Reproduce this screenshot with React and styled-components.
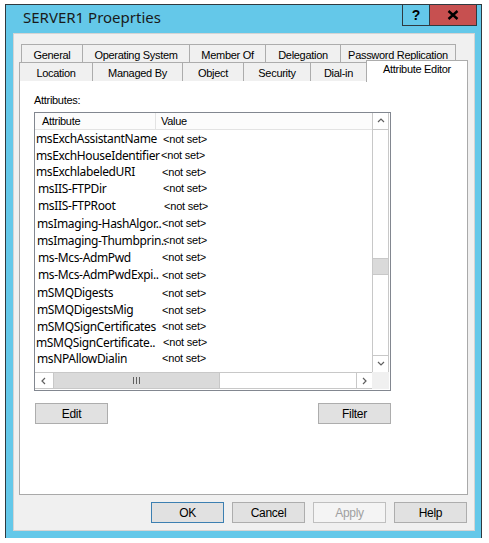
import React from "react";
import styled, { createGlobalStyle } from "styled-components";

const GlobalStyle = createGlobalStyle`
  body {
    margin: 0;
    background: #ffffff;
    font-family: "Liberation Sans", Arial, sans-serif;
  }
`;

const ROW1 = [
  { label: "General", w: 62 },
  { label: "Operating System", w: 108 },
  { label: "Member Of", w: 77 },
  { label: "Delegation", w: 76 },
  { label: "Password Replication", w: 116 },
];

const ROW2 = [
  { label: "Location", w: 74 },
  { label: "Managed By", w: 91 },
  { label: "Object", w: 62 },
  { label: "Security", w: 68 },
  { label: "Dial-in", w: 57 },
  { label: "Attribute Editor", w: 102, active: true },
];

const ATTRS = [
  { name: "msExchAssistantName", h: 17, dx: 1, vx: 1 },
  { name: "msExchHouseIdentifier", h: 16, dx: 1, vx: -1 },
  { name: "msExchlabeledURI", h: 17, dx: 1, vx: 0 },
  { name: "msIIS-FTPDir", h: 16, dx: 3, vx: 1 },
  { name: "msIIS-FTPRoot", h: 19, dx: 3, vx: 2 },
  { name: "msImaging-HashAlgor..", h: 16, dx: 2, vx: 0 },
  { name: "msImaging-Thumbprin..", h: 18, dx: 2, vx: 1 },
  { name: "ms-Mcs-AdmPwd", h: 16, dx: 3, vx: 0 },
  { name: "ms-Mcs-AdmPwdExpi..", h: 19, dx: 3, vx: 0 },
  { name: "mSMQDigests", h: 17, dx: 2, vx: 0 },
  { name: "mSMQDigestsMig", h: 17, dx: 2, vx: 0 },
  { name: "mSMQSignCertificates", h: 16, dx: 2, vx: 0 },
  { name: "mSMQSignCertificate..", h: 16, dx: 1, vx: 1 },
  { name: "msNPAllowDialin", h: 16, dx: 2, vx: 0 },
];

const Window = styled.div`
  box-sizing: border-box;
  margin: 4px 0 0 5px;
  width: 477px;
  height: 534px;
  background: #64c8e9;
  border: 1px solid #2f3a40;
  border-bottom: none;
  display: flex;
  flex-direction: column;
`;

const TitleBar = styled.div`
  height: 28px;
  display: flex;
  align-items: flex-start;
  flex-shrink: 0;
`;

const Title = styled.div`
  flex: 1;
  padding: 2px 0 0 17px;
  font-family: "Noto Sans", "Open Sans", sans-serif;
  font-size: 15px;
  color: #1a1a1a;
`;

const CaptionButton = styled.div`
  box-sizing: border-box;
  margin-top: -1px;
  width: ${(p) => p.$w}px;
  height: 22px;
  border: 1px solid #2f3a40;
  background: ${(p) => p.$bg};
  display: flex;
  align-items: center;
  justify-content: center;
  font-family: "Liberation Sans", Arial, sans-serif;
  font-weight: bold;
  font-size: 14px;
  color: #000;
  & + & {
    margin-left: -1px;
  }
`;

const CaptionGroup = styled.div`
  display: flex;
  margin-right: 4px;
`;

const Client = styled.div`
  box-sizing: border-box;
  margin: 0 6px 0 7px;
  height: 498px;
  background: #f0f0f0;
  border: 1px solid #d4d4d4;
  padding: 10px 6px 0 5px;
  display: flex;
  flex-direction: column;
`;

const TabStrip = styled.div`
  display: flex;
  flex-direction: column;
  font-size: 11px;
  letter-spacing: -0.3px;
  color: #000;
`;

const TabRow = styled.div`
  display: flex;
  height: 18px;
  padding-left: ${(p) => p.$indent}px;
  position: relative;
  z-index: ${(p) => p.$z};
`;

const Tab = styled.div`
  box-sizing: border-box;
  width: ${(p) => p.$w}px;
  height: 19px;
  border: 1px solid #acacac;
  border-bottom: none;
  background: #f0f0f0;
  display: flex;
  align-items: center;
  justify-content: center;
  padding-top: 1px;
  & + & {
    margin-left: -1px;
  }
`;

const ActiveTab = styled(Tab)`
  background: #ffffff;
  height: 22px;
  margin-top: -2px;
  align-items: flex-start;
  padding-top: 2px;
  position: relative;
  z-index: 2;
`;

const Panel = styled.div`
  box-sizing: border-box;
  height: 415px;
  width: 449px;
  background: #ffffff;
  border: 1px solid #a9a9a9;
  padding: 13px 0 0 14px;
  display: flex;
  flex-direction: column;
`;

const Label = styled.div`
  font-size: 11px;
  letter-spacing: -0.3px;
  height: 18px;
  color: #000;
`;

const ListBox = styled.div`
  box-sizing: border-box;
  width: 357px;
  height: 279px;
  border: 1px solid #828790;
  display: grid;
  grid-template-columns: 337px 17px;
  grid-template-rows: 259px 17px;
`;

const ListBody = styled.div`
  overflow: hidden;
  background: #fff;
`;

const Header = styled.div`
  display: flex;
  height: 16px;
  border-bottom: 1px solid #e3e3e3;
  background: #fcfcfc;
  font-size: 11px;
  letter-spacing: -0.3px;
`;

const HeadCell = styled.div`
  box-sizing: border-box;
  width: ${(p) => (p.$w ? `${p.$w}px` : "auto")};
  flex: ${(p) => (p.$w ? "none" : 1)};
  padding-left: ${(p) => p.$pad}px;
  display: flex;
  align-items: center;
  border-right: ${(p) => (p.$w ? "1px solid #e3e3e3" : "none")};
`;

const Row = styled.div`
  display: flex;
  align-items: center;
  height: ${(p) => p.$h}px;
  white-space: nowrap;
`;

const Name = styled.span`
  flex: none;
  width: 127px;
  padding-left: ${(p) => p.$dx}px;
  box-sizing: border-box;
  font-family: "Noto Sans", "Open Sans", sans-serif;
  font-size: 12px;
  letter-spacing: -0.35px;
  color: #000;
`;

const Value = styled.span`
  margin-left: ${(p) => p.$dx}px;
  font-size: 11px;
  letter-spacing: -0.2px;
  color: #000;
`;

const VScroll = styled.div`
  box-sizing: border-box;
  border-left: 1px solid #c8c8c8;
  border-right: 1px solid #c8c8c8;
  display: flex;
  flex-direction: column;
  background: #fff;
`;

const ScrollBtn = styled.div`
  box-sizing: border-box;
  flex: none;
  width: ${(p) => (p.$w ? `${p.$w}px` : "auto")};
  height: ${(p) => (p.$h ? `${p.$h}px` : "auto")};
  display: flex;
  align-items: center;
  justify-content: center;
  background: #fff;
  border-top: ${(p) => (p.$edge === "top" ? "1px solid #c8c8c8" : "none")};
  border-bottom: ${(p) => (p.$edge === "bottom" ? "1px solid #c8c8c8" : "none")};
  border-left: ${(p) => (p.$edge === "left" ? "1px solid #c8c8c8" : "none")};
  border-right: ${(p) => (p.$edge === "right" ? "1px solid #c8c8c8" : "none")};
`;

const Track = styled.div`
  flex: 1;
  display: flex;
  flex-direction: ${(p) => (p.$horizontal ? "row" : "column")};
`;

const VThumb = styled.div`
  box-sizing: border-box;
  margin-top: ${(p) => p.$offset}px;
  height: 17px;
  background: #dadada;
  border-top: 1px solid #c8c8c8;
  border-bottom: 1px solid #c8c8c8;
`;

const HScroll = styled.div`
  box-sizing: border-box;
  border-top: 1px solid #c8c8c8;
  border-bottom: 1px solid #c8c8c8;
  display: flex;
  background: #fff;
`;

const HThumb = styled.div`
  box-sizing: border-box;
  width: ${(p) => p.$w}px;
  background: #dadada;
  border-right: 1px solid #c8c8c8;
  display: flex;
  align-items: center;
  justify-content: center;
`;

const Grip = styled.div`
  display: flex;
  gap: 2px;
  span {
    width: 1px;
    height: 7px;
    background: #606060;
  }
`;

const Corner = styled.div`
  background: #f0f0f0;
`;

const ButtonRow = styled.div`
  display: flex;
  justify-content: space-between;
  width: 356px;
  padding: 12px 0 0 1px;
`;

const Button = styled.div`
  box-sizing: border-box;
  width: 73px;
  height: 21px;
  background: ${(p) => (p.$disabled ? "#f4f4f4" : "#e1e1e1")};
  border: 1px solid
    ${(p) => (p.$default ? "#3c7fb1" : p.$disabled ? "#bfbfbf" : "#adadad")};
  color: ${(p) => (p.$disabled ? "#a0a0a0" : "#000")};
  font-size: 12px;
  letter-spacing: -0.3px;
  display: flex;
  align-items: center;
  justify-content: center;
`;

const Footer = styled.div`
  display: flex;
  justify-content: flex-end;
  gap: 8px;
  padding: 7px 1px 0 0;
`;

const Chevron = ({ dir }) => {
  const pts = {
    up: "1,5 4,2 7,5",
    down: "1,2 4,5 7,2",
    left: "5,1 2,4 5,7",
    right: "2,1 5,4 2,7",
  }[dir];
  return (
    <svg width="8" height="8" viewBox="0 0 8 8">
      <polyline points={pts} fill="none" stroke="#606060" strokeWidth="1.2" />
    </svg>
  );
};

const CloseGlyph = () => (
  <svg width="12" height="10" viewBox="0 0 12 10">
    <path d="M1.5 1 L10.5 9 M10.5 1 L1.5 9" stroke="#000" strokeWidth="2.4" />
  </svg>
);

export default function App() {
  return (
    <>
      <GlobalStyle />
      <Window>
        <TitleBar>
          <Title>SERVER1 Proeprties</Title>
          <CaptionGroup>
            <CaptionButton $w={28} $bg="#64c8e9">?</CaptionButton>
            <CaptionButton $w={48} $bg="#c75050">
              <CloseGlyph />
            </CaptionButton>
          </CaptionGroup>
        </TitleBar>
        <Client>
          <TabStrip>
            <TabRow $indent={2} $z={0}>
              {ROW1.map((t) => (
                <Tab key={t.label} $w={t.w}>
                  {t.label}
                </Tab>
              ))}
            </TabRow>
            <TabRow $indent={0} $z={1}>
              {ROW2.map((t) =>
                t.active ? (
                  <ActiveTab key={t.label} $w={t.w}>
                    {t.label}
                  </ActiveTab>
                ) : (
                  <Tab key={t.label} $w={t.w}>
                    {t.label}
                  </Tab>
                )
              )}
            </TabRow>
          </TabStrip>
          <Panel>
            <Label>Attributes:</Label>
            <ListBox>
              <ListBody>
                <Header>
                  <HeadCell $w={121} $pad={7}>
                    Attribute
                  </HeadCell>
                  <HeadCell $pad={5}>Value</HeadCell>
                </Header>
                {ATTRS.map((a) => (
                  <Row key={a.name} $h={a.h}>
                    <Name $dx={a.dx}>{a.name}</Name>
                    <Value $dx={a.vx}>&lt;not set&gt;</Value>
                  </Row>
                ))}
              </ListBody>
              <VScroll>
                <ScrollBtn $h={17} $edge="bottom">
                  <Chevron dir="up" />
                </ScrollBtn>
                <Track>
                  <VThumb $offset={128} />
                </Track>
                <ScrollBtn $h={17} $edge="top">
                  <Chevron dir="down" />
                </ScrollBtn>
              </VScroll>
              <HScroll>
                <ScrollBtn $w={19} $edge="right">
                  <Chevron dir="left" />
                </ScrollBtn>
                <Track $horizontal>
                  <HThumb $w={166}>
                    <Grip>
                      <span />
                      <span />
                      <span />
                    </Grip>
                  </HThumb>
                </Track>
                <ScrollBtn $w={16} $edge="left">
                  <Chevron dir="right" />
                </ScrollBtn>
              </HScroll>
              <Corner />
            </ListBox>
            <ButtonRow>
              <Button>Edit</Button>
              <Button>Filter</Button>
            </ButtonRow>
          </Panel>
          <Footer>
            <Button $default>OK</Button>
            <Button>Cancel</Button>
            <Button $disabled>Apply</Button>
            <Button>Help</Button>
          </Footer>
        </Client>
      </Window>
    </>
  );
}
